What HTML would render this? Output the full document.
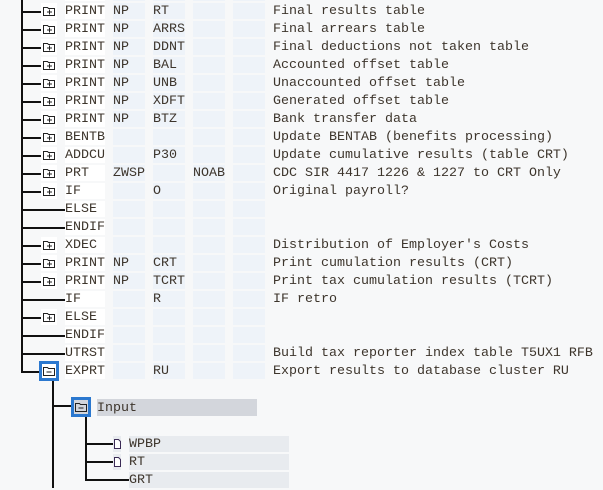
<!DOCTYPE html>
<html><head><style>
body{margin:0;width:603px;height:488px;background:#f7f8f9;position:relative;overflow:hidden;font-family:"Liberation Mono",monospace;font-size:13.34px;color:#3d352c}
.a{position:absolute}
.c{position:absolute;height:16px;line-height:18px;white-space:pre}
.w{background:#fff}
.b{background:#eef3f9}
.h{position:absolute;height:1.5px;background:#111}
.v{position:absolute;width:1.5px;background:#111}
</style></head><body>
<div class="v" style="left:21px;top:0;height:373px"></div>
<div id="rows"></div>
<script>
var R=[
["p","PRINT","NP","RT","","","Final results table"],
["p","PRINT","NP","ARRS","","","Final arrears table"],
["p","PRINT","NP","DDNT","","","Final deductions not taken table"],
["p","PRINT","NP","BAL","","","Accounted offset table"],
["p","PRINT","NP","UNB","","","Unaccounted offset table"],
["p","PRINT","NP","XDFT","","","Generated offset table"],
["p","PRINT","NP","BTZ","","","Bank transfer data"],
["p","BENTB","","","","","Update BENTAB (benefits processing)"],
["p","ADDCU","","P30","","","Update cumulative results (table CRT)"],
["p","PRT","ZWSP","","NOAB","","CDC SIR 4417 1226 & 1227 to CRT Only"],
["p","IF","","O","","","Original payroll?"],
["","ELSE","","","","",""],
["","ENDIF","","","","",""],
["p","XDEC","","","","","Distribution of Employer's Costs"],
["p","PRINT","NP","CRT","","","Print cumulation results (CRT)"],
["p","PRINT","NP","TCRT","","","Print tax cumulation results (TCRT)"],
["","IF","","R","","","IF retro"],
["p","ELSE","","","","",""],
["","ENDIF","","","","",""],
["","UTRST","","","","","Build tax reporter index table T5UX1 RFB"],
["m","EXPRT","","RU","","","Export results to database cluster RU"]];
var icon='<svg width="12" height="10" viewBox="0 0 12 10" style="position:absolute;left:2px;top:3px"><path d="M0.5 1.5h4l1 1h6v7h-11z" fill="none" stroke="#222" stroke-width="1"/><path d="M4 6h5M6.5 3.5v5" stroke="#222" stroke-width="1"/></svg>';
var h='';
for(var i=-1;i<R.length;i++){
 var t=3+18*i,r=R[i]||["","","","","","",""];
 if(i>=0){
 if(r[0]=="p"){h+='<div class="h" style="left:21px;top:'+(t+8)+'px;width:20px"></div><div class="c w" style="left:41px;top:'+t+'px;width:16px">'+icon+'</div>';}
 else if(r[0]=="m"){h+='<div class="h" style="left:21px;top:'+(t+8)+'px;width:18px"></div><div class="a" style="left:39px;top:'+(t-2)+'px;width:20px;height:20px;background:#2b78cf"><div class="a" style="left:3px;top:3px;width:14px;height:14px;background:#fff"><svg width="12" height="10" viewBox="0 0 12 10" style="position:absolute;left:1px;top:2px"><path d="M0.5 1.5h4l1 1h6v7h-11z" fill="none" stroke="#222"/><path d="M3.5 6h5" stroke="#222"/></svg></div></div>';}
 else h+='<div class="h" style="left:21px;top:'+(t+8)+'px;width:44px"></div>';
 }
 h+='<div class="c w" style="left:65px;top:'+t+'px;width:40px">'+r[1]+'</div>';
 h+='<div class="c b" style="left:113px;top:'+t+'px;width:32px">'+r[2]+'</div>';
 h+='<div class="c b" style="left:153px;top:'+t+'px;width:32px">'+r[3]+'</div>';
 h+='<div class="c b" style="left:193px;top:'+t+'px;width:32px">'+r[4]+'</div>';
 h+='<div class="c b" style="left:233px;top:'+t+'px;width:32px">'+r[5]+'</div>';
 h+='<div class="c" style="left:273px;top:'+t+'px">'+r[6]+'</div>';
}
document.getElementById('rows').innerHTML=h;
</script>
<div class="v" style="left:52px;top:381px;height:107px"></div>
<div class="h" style="left:52px;top:405px;width:19px"></div>
<div class="a" style="left:71px;top:397px;width:20px;height:20px;background:#2b78cf"><div class="a" style="left:3px;top:3px;width:14px;height:14px;background:#d3d6dc"><svg width="12" height="10" viewBox="0 0 12 10" style="position:absolute;left:1px;top:2px"><path d="M0.5 1.5h4l1 1h6v7h-11z" fill="none" stroke="#222"/><path d="M3.5 6h5" stroke="#222"/></svg></div></div>
<div class="c" style="left:97px;top:399px;width:160px;height:17px;background:#d3d6dc;line-height:19px">Input</div>
<div class="v" style="left:85px;top:417px;height:62px"></div>
<div class="h" style="left:85px;top:443px;width:28px"></div>
<div class="h" style="left:85px;top:461px;width:28px"></div>
<div class="h" style="left:85px;top:479px;width:44px"></div>
<div class="a" style="left:113px;top:436px;width:8px;height:16px;background:#e8ebef"><svg width="8" height="10" style="position:absolute;left:1px;top:3px"><path d="M0.5 0.5h4l2 2v7h-6z" fill="#fff" stroke="#3a2a55"/></svg></div>
<div class="a" style="left:113px;top:454px;width:8px;height:16px;background:#e8ebef"><svg width="8" height="10" style="position:absolute;left:1px;top:3px"><path d="M0.5 0.5h4l2 2v7h-6z" fill="#fff" stroke="#3a2a55"/></svg></div>
<div class="c" style="left:129px;top:436px;width:160px;background:#e8ebef">WPBP</div>
<div class="c" style="left:129px;top:454px;width:160px;background:#e8ebef">RT</div>
<div class="c" style="left:129px;top:472px;width:160px;background:#e8ebef">GRT</div>
</body></html>
